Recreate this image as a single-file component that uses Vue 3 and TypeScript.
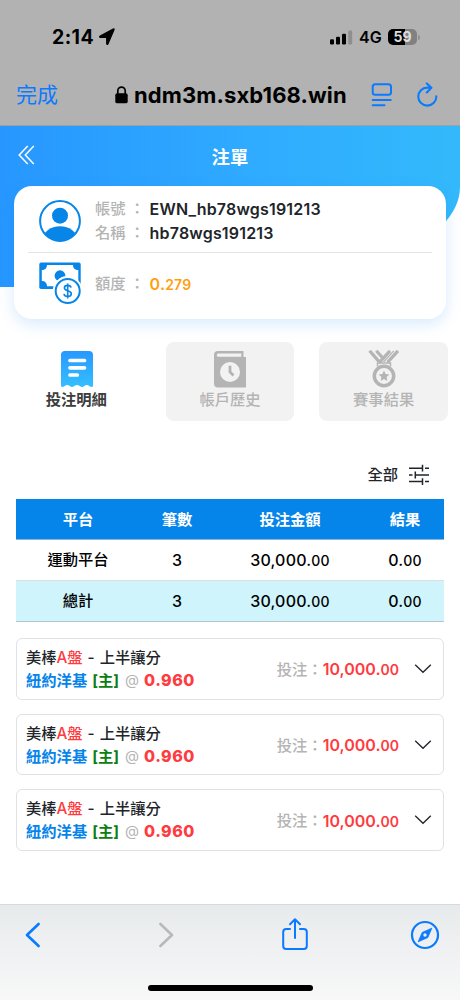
<script setup lang="ts">
interface Bet {
  id: number
  league: string
  plate: string
  market: string
  team: string
  side: string
  odds: string
  stake: string
  cents: string
}

interface SummaryRow {
  name: string
  count: number
  amount: string
  result: string
  total?: boolean
}

const rows: SummaryRow[] = [
  { name: '運動平台', count: 3, amount: '30,000.', result: '0.' },
  { name: '總計', count: 3, amount: '30,000.', result: '0.', total: true },
]

const bets: Bet[] = [1, 2, 3].map((id) => ({
  id,
  league: '美棒',
  plate: 'A盤',
  market: '上半讓分',
  team: '紐約洋基',
  side: '[主]',
  odds: '0.960',
  stake: '10,000.',
  cents: '00',
}))
</script>

<template>
  <div class="screen" lang="zh-Hant">
    <div class="browser">
      <div class="status">
        <span class="time">2:14</span>
        <svg class="loc" width="18" height="18" viewBox="0 0 18 18"><path d="M16 1.800 10 15.800c-.4.9-1.300.6-1.300-.3V9.400H2.500c-1 0-1.200-.9-.3-1.300L15.200 1c.8-.3 1.100.1.8.8z" stroke="#000" stroke-width="1.200" stroke-linejoin="round" /></svg>
        <svg class="signal" width="23" height="15" viewBox="0 0 23 15">
          <rect x="0" y="9.300" width="4" height="5.200" rx="1.200" /><rect x="6" y="6.800" width="4" height="7.700" rx="1.200" />
          <rect x="12" y="3.800" width="4" height="10.700" rx="1.200" /><rect x="18.200" y=".5" width="4" height="14" rx="1.200" fill="#8f8f8f" />
        </svg>
        <span class="net">4G</span>
        <div class="battery"><span>59</span></div>
        <i class="nub"></i>
      </div>
      <div class="address">
        <span class="done">完成</span>
        <svg class="lock" width="13" height="18" viewBox="0 0 13 18"><rect x=".3" y="7.300" width="12.400" height="10" rx="1.900" /><path d="M2.800 8V4.800a3.700 3.700 0 0 1 7.400 0V8" fill="none" stroke="#000" stroke-width="1.700" /></svg>
        <span class="host">ndm3m.sxb168.win</span>
        <svg class="reader" width="22" height="24" viewBox="0 0 22 24" fill="none" stroke="#0a7aff" stroke-width="2" stroke-linecap="round"><rect x="1.700" y="1.300" width="18.300" height="10.500" rx="2.500" /><path d="M1.700 17H19.700M1.700 22.200H13.500" /></svg>
        <svg class="reload" width="22" height="25" viewBox="0 0 22 25" fill="none" stroke="#0a7aff" stroke-width="2.100" stroke-linecap="round" stroke-linejoin="round"><path d="M20.300 14.300a9 9 0 1 1-9-8.700H15.200M10.800 1.400 15.400 5.800 10.800 10.500" /></svg>
      </div>
    </div>

    <header class="hero">
      <svg class="back" width="18" height="20" viewBox="0 0 18 20" fill="none" stroke="#fff" stroke-width="1.500"><path d="M9.700 1 1.200 10l8.500 9M15.800 1 7.300 10l8.500 9" /></svg>
      <h1>注單</h1>
    </header>

    <section class="account">
      <div class="who">
        <svg width="42" height="42" viewBox="0 0 42 42">
          <defs><clipPath id="face"><circle cx="21" cy="21" r="20" /></clipPath></defs>
          <circle cx="21" cy="21" r="19.900" fill="#fff" stroke="#0786e8" stroke-width="2" />
          <circle cx="21" cy="15.700" r="8" fill="#0786e8" />
          <ellipse cx="21" cy="39" rx="17" ry="12.700" fill="#0786e8" clip-path="url(#face)" />
        </svg>
        <div class="lines">
          <p><span class="label">帳號</span><span class="colon">：</span><b>EWN_hb78wgs191213</b></p>
          <p><span class="label">名稱</span><span class="colon">：</span><b>hb78wgs191213</b></p>
        </div>
      </div>
      <div class="credit">
        <svg width="42" height="43" viewBox="0 0 42 43">
          <rect x=".3" y=".6" width="41.400" height="26.400" rx="1.800" fill="#0786e8" />
          <path d="M8 3H34c0 3 2 5 5.300 5V19c-3.300 0-5.300 2-5.300 5.300H8C8 21 6 19 2.800 19V8C6 8 8 6 8 3z" fill="#fff" />
          <circle cx="21" cy="13.700" r="5.400" fill="#0786e8" />
          <circle cx="28.700" cy="29" r="15" fill="#fff" />
          <circle cx="28.700" cy="29" r="12" fill="#fff" stroke="#0786e8" stroke-width="2" />
          <path d="M32 25.600c-.3-1.500-1.500-2.200-3.300-2.200-2 0-3.300.9-3.300 2.500 0 3.600 6.900 2 6.900 5.800 0 1.800-1.500 2.700-3.600 2.700s-3.500-.9-3.700-2.600M28.700 21.400v15.200" fill="none" stroke="#0786e8" stroke-width="1.600" />
        </svg>
        <p><span class="label">額度</span><span class="colon">：</span><b class="gold">0.<small>279</small></b></p>
      </div>
    </section>

    <nav class="tabs">
      <div class="tab active">
        <svg width="34" height="38" viewBox="0 0 34 38">
          <defs><linearGradient id="bill" x1="0" y1="0" x2="0" y2="1"><stop offset="0" stop-color="#2898ff" /><stop offset="1" stop-color="#34bfff" /></linearGradient></defs>
          <path d="M1 5a4 4 0 0 1 4-4H29a4 4 0 0 1 4 4V36.300c-1 1-2 .8-3.400-.1-2-1.500-3.800-1.500-5.600 0-1.300 1.100-2.600 1.100-4 0-2-1.500-4-1.500-6 0-1.300 1.100-2.700 1.100-4 0-1.800-1.500-3.600-1.500-5.600 0-1.400 1-2.400 1-3.400.1z" fill="url(#bill)" />
          <path d="M10 10.500H24.500M10 17.800H24.500M10 25H17.300" stroke="#fff" stroke-width="3.700" stroke-linecap="round" />
        </svg>
        <span>投注明細</span>
      </div>
      <div class="tab">
        <svg width="34" height="38" viewBox="0 0 34 38">
          <path d="M5 1H30.500V7H33V37.500H5a4 4 0 0 1-4-4V5a4 4 0 0 1 4-4z" fill="#b4b4b4" />
          <path d="M5.300 3.600H28.300V6.700H5.300a1.500 1.500 0 0 1 0-3.100z" fill="#f2f2f2" />
          <circle cx="17" cy="22" r="10" fill="#f2f2f2" /><path d="M17 15.700V22l3.500 3.600" fill="none" stroke="#b4b4b4" stroke-width="2.800" />
        </svg>
        <span>帳戶歷史</span>
      </div>
      <div class="tab">
        <svg width="34" height="38" viewBox="0 0 34 38" fill="none" stroke="#b4b4b4">
          <path d="M2.600 .800 12 11.600M9.300 .800 16 8.300M23 .800 12 12.800M31 .800 20.500 12.300" stroke-width="3.200" />
          <path d="M26.800 .800 16.500 12" stroke-width="1.200" />
          <path d="M10.500 16.500V13H23.500v3.500" stroke-width="1.500" />
          <circle cx="17" cy="26" r="9.700" stroke-width="3.500" />
          <path d="m17 20.500 1.600 3.500 3.800.5-2.800 2.600.7 3.800-3.300-1.900-3.300 1.900.7-3.800-2.800-2.600 3.800-.5z" fill="#b4b4b4" stroke="none" />
        </svg>
        <span>賽事結果</span>
      </div>
    </nav>

    <div class="filter">
      <span>全部</span>
      <svg width="22" height="22" viewBox="0 0 22 22" fill="none" stroke="#212529" stroke-width="1.500"><path d="M1 4.200H14.500M17 4.200H21M14.500 .8V7.500M1 11H4.500M7.300 11H21M7.300 7.500v7M1 17.500H14.500M17 17.500H21M14.500 14.300V21" /></svg>
    </div>

    <div class="table">
      <div class="row head"><span>平台</span><span>筆數</span><span>投注金額</span><span>結果</span></div>
      <div v-for="row in rows" :key="row.name" class="row" :class="{ total: row.total }">
        <span>{{ row.name }}</span><span>{{ row.count }}</span>
        <span>{{ row.amount }}<small>00</small></span><span>{{ row.result }}<small>00</small></span>
      </div>
    </div>

    <main class="bets">
      <article v-for="bet in bets" :key="bet.id" class="bet">
        <div class="info">
          <p>{{ bet.league }}<span class="red plate">{{ bet.plate }}</span><span class="dash">-</span>{{ bet.market }}</p>
          <p class="pick"><span class="team">{{ bet.team }}</span><span class="side">{{ bet.side }}</span><span class="at">@</span><span class="odds">{{ bet.odds }}</span></p>
        </div>
        <div class="stake"><span class="label">投注：</span><b>{{ bet.stake }}<small>{{ bet.cents }}</small></b></div>
        <svg width="18" height="12" viewBox="0 0 18 12" fill="none" stroke="#212529" stroke-width="1.300"><path d="m1.200 1.700 7.800 7.600 7.800-7.600" /></svg>
      </article>
    </main>

    <footer class="toolbar">
      <div class="tools">
        <svg width="16" height="26" viewBox="0 0 16 26" fill="none" stroke="#0a7aff" stroke-width="2.600" stroke-linecap="round" stroke-linejoin="round"><path d="M13.600 2 2 13l11.600 11" /></svg>
        <svg width="16" height="26" viewBox="0 0 16 26" fill="none" stroke="#b7b9ba" stroke-width="2.600" stroke-linecap="round" stroke-linejoin="round"><path d="m2.400 2 11.600 11-11.600 11" /></svg>
        <svg width="26" height="34" viewBox="0 0 26 34" fill="none" stroke="#0a7aff" stroke-width="2" stroke-linecap="round" stroke-linejoin="round"><path d="M8 12H4.200A3 3 0 0 0 1.200 15V29a3 3 0 0 0 3 3H21.800a3 3 0 0 0 3-3V15a3 3 0 0 0-3-3H18M13 21V2.500M8 7.300l5-5 5 5" /></svg>
        <svg width="30" height="30" viewBox="0 0 30 30"><circle cx="15" cy="15" r="13" fill="none" stroke="#0a7aff" stroke-width="2.200" /><path d="M21.800 8.200 17.800 17.600 8.200 21.800 12.200 12.400z" fill="#0a7aff" stroke="#0a7aff" stroke-width=".8" stroke-linejoin="round" /><circle cx="15" cy="15" r="1.700" fill="#eceeef" /></svg>
      </div>
      <div class="home"></div>
    </footer>
  </div>
</template>

<style>
body { margin: 0; background: #fff; }
</style>

<style scoped>
.screen {
  width: 460px;
  height: 1000px;
  overflow: hidden;
  display: flex;
  flex-direction: column;
  background: #fff;
  color: #212529;
  font-family: Inter, "Noto Sans CJK TC", sans-serif;
  font-size: 15.300px;
  font-weight: 500;
}
p, h1 { margin: 0; }
svg { display: block; flex: none; }
span, b, small { white-space: nowrap; }
.screen > * { flex: none; }

.browser { height: 125px; background: #b2b2b2; border-bottom: 1px solid #9aa2a9; color: #000; }
.status { display: flex; align-items: center; height: 74px; padding-left: 52px; box-sizing: border-box; }
.time { width: 46px; font-size: 19.500px; font-weight: 700; letter-spacing: .4px; line-height: 20px; }
.signal { margin-left: 214px; margin-top: 1px; }
.net { margin-left: 6px; width: 29px; font-size: 16px; font-weight: 600; line-height: 20px; }
.battery { width: 29px; height: 16px; border-radius: 5px; background: linear-gradient(90deg, #000 59%, #818181 59%); color: #ddd; font-size: 14px; font-weight: 700; line-height: 16px; text-align: center; margin-top: -1px; }
.nub { width: 2px; height: 5px; margin-left: 1px; border-radius: 0 2px 2px 0; background: #909090; }
.address { display: flex; align-items: center; height: 41px; padding-left: 16px; }
.done { width: 99px; font-size: 21px; font-weight: 400; color: #0a7aff; line-height: 24px; }
.host { margin-left: 6px; width: 237px; font-size: 22px; font-weight: 700; letter-spacing: .12px; line-height: 24px; }
.reload { margin-left: 23px; margin-top: -1px; }

.hero { height: 161px; box-sizing: border-box; padding: 20px 18px; display: grid; grid-template-columns: 60px 1fr 60px; align-items: start; background: linear-gradient(90deg, #2797ff, #2fabff 55%, #33b9fb); border-bottom-right-radius: 232px 100px; }
.back { margin-top: -1px; }
.hero h1 { text-align: center; color: #fff; font-size: 18.400px; font-weight: 700; line-height: 22px; }

.account { position: relative; margin: -101px 14px 0; height: 133px; box-sizing: border-box; padding: 0 14px; border-radius: 18px; background: #fff; box-shadow: 0 5px 16px rgba(0, 125, 245, .16); color: #212529; }
.account p { display: flex; height: 24px; line-height: 24px; }
.who { display: flex; align-items: center; height: 67px; box-sizing: border-box; padding: 3px 0 0 11px; border-bottom: 1px solid #e4e4e4; }
.credit { display: flex; align-items: center; height: 60px; padding-left: 11px; }
.lines, .credit p { margin-left: 14px; }
.credit p { margin-top: 2px; }
.label { color: #b4b4b4; }
.colon { width: 24px; padding-left: 4px; box-sizing: border-box; color: #b4b4b4; }
.account b { font-size: 16px; font-weight: 600; letter-spacing: .18px; }
.account .gold { color: #ff9f0f; }
.gold small { font-size: 14px; }

.tabs { display: grid; grid-template-columns: repeat(3, 1fr); gap: 25px; margin: 23px 12px 0; height: 79px; }
.tab { display: flex; flex-direction: column; align-items: center; padding-top: 8px; border-radius: 8px; background: #f2f2f2; color: #b4b4b4; }
.tab svg { margin-left: 1px; }
.tab.active { background: none; color: #3c3c3c; font-weight: 700; }
.tab span { line-height: 20px; margin-top: 2px; }

.filter { display: flex; align-items: center; justify-content: flex-end; gap: 10px; height: 22px; margin: 43px 30px 0 0; }
.filter span { line-height: 22px; }

.table { margin: 13px 16px 0; color: #000; }
.row { display: grid; grid-template-columns: 124px 74px 152px 78px; align-items: center; height: 41px; box-sizing: border-box; border-bottom: 1px solid #dcdfe2; text-align: center; line-height: 22px; font-size: 15.300px; }
.row span { font-size: inherit; }
.row:not(.head) span:nth-child(n + 2) { font-size: 16px; letter-spacing: .2px; }
.row small { font-size: 14px; }
.row.head { color: #fff; font-weight: 700; padding-top: 1px; background: #0584e9; border-color: #8ab5d9; }
.row.total { background: #cff4fc; border-color: #b3c6cb; }

.bets { display: flex; flex-direction: column; gap: 14px; margin: 16px 16px 0; height: 266px; }
.bet { display: flex; align-items: center; height: 61.700px; box-sizing: border-box; padding: 0 11px 0 9px; border: 1px solid #dfe2e6; border-radius: 6px; }
.info { flex: 1; }
.info p { display: flex; height: 23px; line-height: 23px; }
.plate { letter-spacing: -.1px; }
.red { color: #ff3b40; }
.dash { margin: 0 5px 0 5px; }
.team { color: #0584e9; font-weight: 700; }
.side { margin-left: 5px; color: #0b8010; font-weight: 700; }
.at { margin-left: 6px; color: #b4b4b4; font-weight: 400; font-size: 14.500px; line-height: 22px; }
.odds { margin-left: 5px; color: #ff3b40; font-size: 16px; font-weight: 800; letter-spacing: .5px; }
.stake { display: flex; align-items: center; line-height: 22px; margin: 2px 15px 0 0; }
.stake b { color: #ff3b40; font-size: 16px; font-weight: 600; }
.stake small { font-size: 14px; }

.toolbar { height: 96px; box-sizing: border-box; border-top: 1px solid #d7d9db; background: linear-gradient(180deg, #e7eaec, #f8f8f8); }
.tools { display: flex; align-items: center; height: 60px; padding-left: 25px; }
.tools svg:nth-child(2) { margin-left: 117px; }
.tools svg:nth-child(3) { margin-left: 108px; margin-top: -2px; }
.tools svg:nth-child(4) { margin-left: 102px; }
.home { width: 165px; height: 6px; margin: 20px auto 0; border-radius: 3px; background: #000; }
</style>
